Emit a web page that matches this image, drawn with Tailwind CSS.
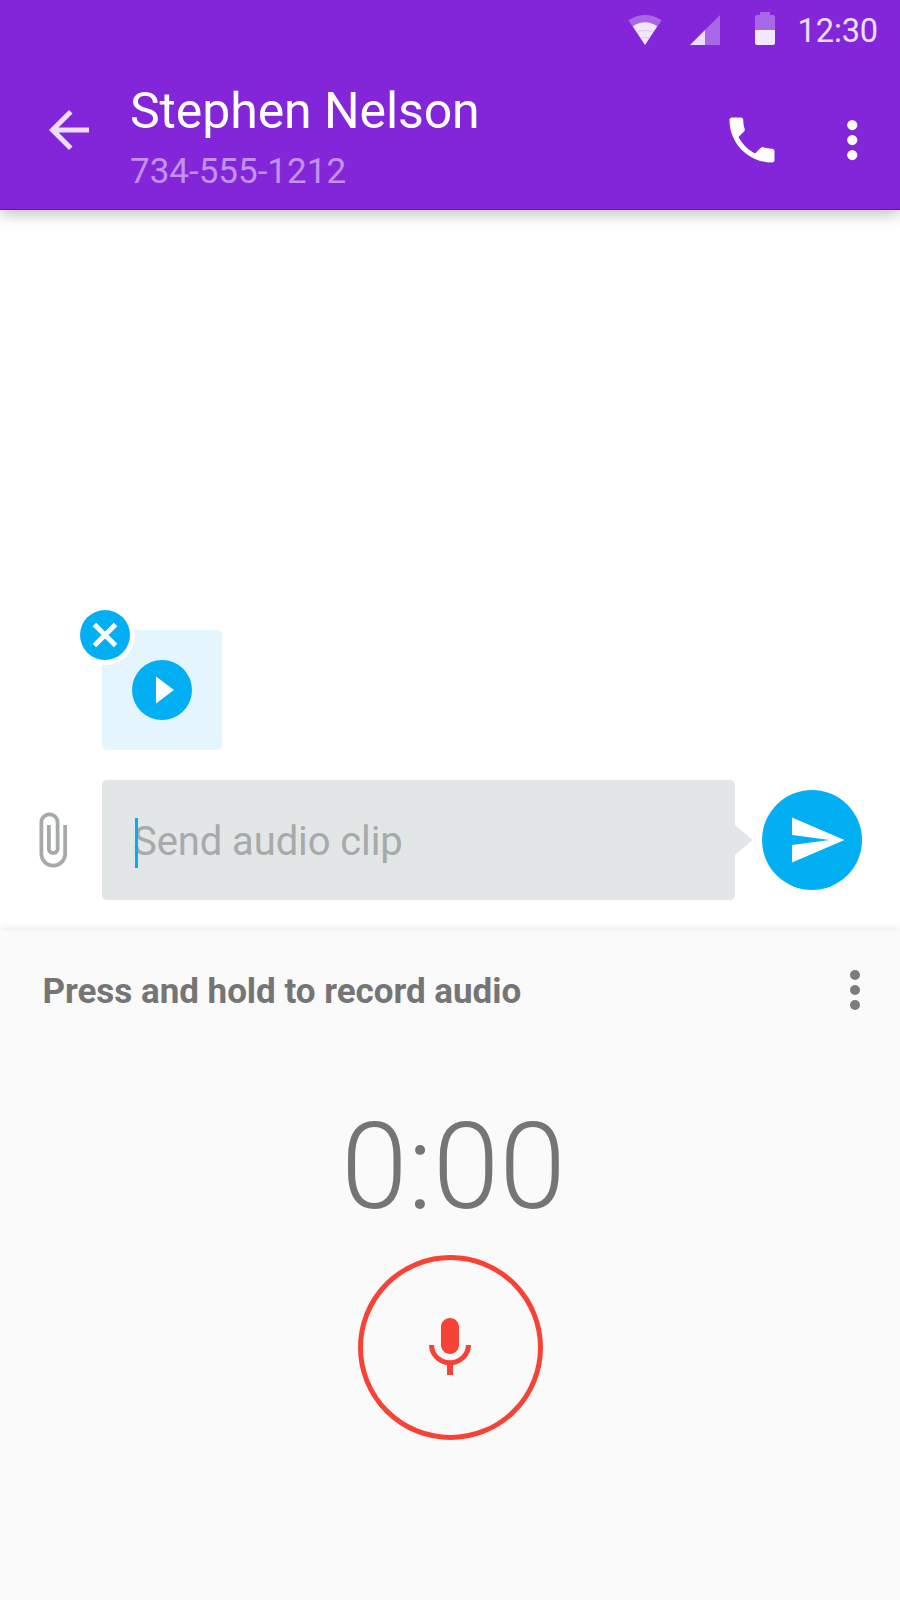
<!DOCTYPE html>
<html lang="en">
<head>
<meta charset="utf-8">
<title>Stephen Nelson</title>
<script src="https://cdn.jsdelivr.net/npm/@tailwindcss/browser@4"></script>
</head>
<body class="bg-white font-['Roboto',sans-serif]">
<div class="flex h-[1600px] w-[900px] flex-col overflow-hidden">
  <header class="relative z-10 h-[210px] shrink-0 border-b border-[#6d0ad3] bg-[#8326d9] shadow-[0_4px_14px_rgba(0,0,0,0.26)]">
    <!-- Status bar -->
    <div class="flex h-[60px] items-center justify-end pr-[22px]">
      <svg class="h-[60px] w-[180px]" viewBox="0 0 180 60" fill="#fff">
        <path fill-opacity=".3" d="M28.3 20.2Q45 9.8 61.7 20.2L45 45Z"/>
        <path fill-opacity=".84" d="M32.8 26.3Q45 18.2 57.2 26.3L45 45Z"/>
        <path d="M37.5 31.6Q45 28.8 52.5 31.6M41 38Q45 36.2 49 38" fill="none" stroke="#8326d9" stroke-opacity=".16"/>
        <path fill-opacity=".3" d="M120 15V45H105V30Z"/>
        <path fill-opacity=".85" d="M105 30V45H90Z"/>
        <path fill-opacity=".3" d="M155 30V17Q155 15 157 15H160V12H170V15H173Q175 15 175 17V30Z"/>
        <path fill-opacity=".9" d="M155 30H175V43Q175 45 173 45H157Q155 45 155 43Z"/>
      </svg>
      <span class="ml-[17.5px] pt-[3px] text-[32.5px] leading-none tracking-[-0.1px] text-white/85">12:30</span>
    </div>
    <!-- App bar -->
    <div class="flex items-start pl-[39px] pr-[18px]">
      <svg class="mt-10 size-[60px] shrink-0" viewBox="0 0 24 24" fill="#fff" fill-opacity=".85"><path d="M20 11H7.83l5.59-5.59L12 4l-8 8 8 8 1.41-1.41L7.83 13H20v-2z"/></svg>
      <div class="ml-[31px] mt-[21px] flex-1 text-white">
        <h1 class="text-[50px] leading-[60px] tracking-[-0.1px]">Stephen Nelson</h1>
        <p class="mt-[10px] text-[35px] leading-[42px] text-white/50">734-555-1212</p>
      </div>
      <svg class="mt-[50px] size-[60px]" viewBox="0 0 24 24" fill="#fff"><path d="M6.62 10.79c1.44 2.83 3.76 5.14 6.59 6.59l2.2-2.2c.27-.27.67-.36 1.02-.24 1.12.37 2.33.57 3.57.57.55 0 1 .45 1 1V20c0 .55-.45 1-1 1-9.39 0-17-7.61-17-17 0-.55.45-1 1-1h3.5c.55 0 1 .45 1 1 0 1.25.2 2.45.57 3.57.11.35.03.74-.25 1.02l-2.2 2.2z"/></svg>
      <svg class="ml-10 mt-[50px] size-[60px]" viewBox="0 0 24 24" fill="#fff"><circle cx="12.1" cy="6" r="2.05"/><circle cx="12.1" cy="12" r="2.05"/><circle cx="12.1" cy="18" r="2.05"/></svg>
    </div>
  </header>

  <main class="flex h-[720px] shrink-0 flex-col justify-end pb-[30px]">
    <!-- Attached clip -->
    <div class="relative ml-[102px] flex size-[120px] items-center justify-center rounded-[5px] bg-[#e4f5fd]">
      <svg class="size-[72px]" viewBox="0 0 24 24"><circle cx="12" cy="12" r="10" fill="#03aff3"/><path fill="#fff" d="M10 7.5v9l6-4.5z"/></svg>
      <svg class="absolute -left-[27px] -top-[25px] size-[60px]" viewBox="0 0 60 60"><circle cx="30" cy="30" r="30" fill="#fff"/><circle cx="30" cy="30" r="25" fill="#03aff3"/><path d="M19.4 19.4 40.6 40.6M40.6 19.4 19.4 40.6" stroke="#fff" stroke-width="5"/></svg>
    </div>
    <!-- Composer -->
    <div class="mt-[30px] flex items-center">
      <svg class="ml-[22px] size-[60px]" viewBox="0 0 24 24" fill="#a5a9a9"><path d="M16.5 6v11.5c0 2.21-1.79 4-4 4s-4-1.79-4-4V5c0-1.38 1.12-2.5 2.5-2.5s2.5 1.12 2.5 2.5v10.5c0 .55-.45 1-1 1s-1-.45-1-1V6H10v9.5c0 1.38 1.12 2.5 2.5 2.5s2.5-1.12 2.5-2.5V5c0-2.21-1.79-4-4-4S7 2.79 7 5v12.5c0 3.04 2.46 5.5 5.5 5.5s5.5-2.46 5.5-5.5V6h-1.5z"/></svg>
      <div class="relative ml-5 flex h-[120px] w-[633px] items-center rounded-[5px] bg-[#e2e6e7] pl-[31px]">
        <span class="pt-1 text-[40px] leading-[48px] tracking-[-0.1px] text-[#a6aaaa]">Send audio clip</span>
        <span class="absolute left-[33px] top-[37.5px] h-[50px] w-[2.5px] bg-[#03aff3]"></span>
      </div>
      <svg class="h-[30px] w-[17.5px]" viewBox="0 0 17.5 30"><path fill="#e2e6e7" d="M0 0 17.5 15 0 30Z"/></svg>
      <div class="ml-[9.5px] flex size-[100px] items-center justify-center rounded-full bg-[#03aff3] pl-[10px]">
        <svg class="size-[60px]" viewBox="0 0 24 24" fill="#fff"><path d="M2.01 21 23 12 2.01 3 2 10l15 2-15 2z"/></svg>
      </div>
    </div>
  </main>

  <!-- Audio recorder -->
  <section class="flex flex-1 flex-col items-center bg-[#fafafa] shadow-[0_0_9px_rgba(0,0,0,0.12)]">
    <div class="flex h-[120px] w-full items-center justify-between pl-[42.5px] pr-[15px]">
      <h2 class="pt-1 text-[35px] font-bold leading-[42px] tracking-[-0.03px] text-[#757575]">Press and hold to record audio</h2>
      <svg class="size-[60px]" viewBox="0 0 24 24" fill="#7d7d7d"><circle cx="12" cy="6" r="2"/><circle cx="12" cy="12" r="2"/><circle cx="12" cy="18" r="2"/></svg>
    </div>
    <div class="mt-[47px] pl-[7px] text-[120px] font-light leading-[140px] text-[#757575]">0:00</div>
    <div class="mt-[18px] flex size-[185px] items-center justify-center rounded-full border-5 border-[#f74236]">
      <svg class="size-[72px]" viewBox="0 0 24 24" fill="#f74236"><path d="M12 14c1.66 0 2.99-1.34 2.99-3L15 5c0-1.66-1.34-3-3-3S9 3.34 9 5v6c0 1.66 1.34 3 3 3zm5.3-3c0 3-2.54 5.1-5.3 5.1S6.7 14 6.7 11H5c0 3.41 2.72 6.23 6 6.72V21h2v-3.28c3.28-.48 6-3.3 6-6.72h-1.7z"/></svg>
    </div>
  </section>
</div>
</body>
</html>
